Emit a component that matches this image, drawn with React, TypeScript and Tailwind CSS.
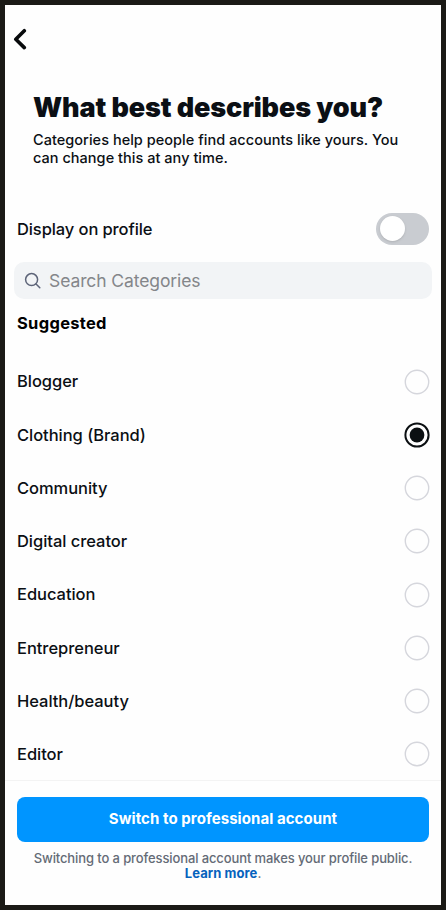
import React from "react";

const categories = ["Blogger", "Clothing (Brand)", "Community", "Digital creator", "Education", "Entrepreneur", "Health/beauty", "Editor"];

function Radio({ checked }: { checked: boolean }) {
  return (
    <svg className="-mr-px" width="26" height="26" viewBox="0 0 26 26" fill="none">
      {checked ? (
        <>
          <circle cx="13" cy="13" r="11.6" stroke="#0b0f12" strokeWidth="2" />
          <circle cx="13" cy="13" r="7.4" fill="#0b0f12" />
        </>
      ) : (
        <circle cx="13" cy="13" r="11.7" stroke="#d5d6dc" strokeWidth="1.4" />
      )}
    </svg>
  );
}

export default function App() {
  return (
    <div className="flex h-[910px] w-[446px] flex-col overflow-hidden border-[5px] border-[#1b1a16] bg-[#fefefe] font-['Inter',sans-serif] text-[#0b0f14]">
      <header className="pt-[23px] pl-[8px]">
        <svg width="14" height="22" viewBox="0 0 14 22" fill="none" stroke="#080a0c" strokeWidth="3.6" strokeLinecap="round" strokeLinejoin="round">
          <path d="M11.3 2.7 2.8 11.2 11.3 19.6" />
        </svg>
      </header>
      <section className="mt-[40px] pl-[28px]">
        <h1 className="text-[27px] leading-[36px] font-black tracking-[-0.12px] whitespace-nowrap">What best describes you?</h1>
        <p className="mt-[5px] text-[14.5px] leading-[18px] font-medium tracking-[0.03px] whitespace-nowrap">Categories help people find accounts like yours. You<br />can change this at any time.</p>
      </section>
      <div className="mt-[45px] flex h-[33px] items-center justify-between pr-[12px] pl-[12px]">
        <span className="pt-px text-[16.5px] font-medium tracking-[-0.1px]">Display on profile</span>
        <span className="flex h-[32px] w-[53px] items-center rounded-full bg-[#c9ccd1] pl-[4px]"><span className="size-[25px] rounded-full bg-white shadow-sm" /></span>
      </div>
      <div className="mx-[9px] mt-[17px] flex h-[37px] shrink-0 items-center rounded-[10px] bg-[#f2f4f6] pl-[10px] text-[17.5px] tracking-[-0.1px] text-[#84868a]">
        <svg className="mr-[7px]" width="18" height="18" viewBox="0 0 18 18" fill="none" stroke="#5d6478" strokeWidth="1.5" strokeLinecap="round"><circle cx="7.6" cy="7.6" r="6" /><path d="m12 12 3.8 3.8" /></svg>
        <span className="pt-px">Search Categories</span>
      </div>
      <h2 className="mt-[12px] pl-[12px] text-[16.5px] leading-[24px] font-bold tracking-[0.3px] text-black">Suggested</h2>
      <div className="mt-[20px] flex flex-col">
        {categories.map((c) => (
          <div key={c} className="flex h-[53.25px] items-center justify-between px-[12px] text-[16.5px] font-medium tracking-[-0.04px]">
            <span>{c}</span>
            <Radio checked={c === "Clothing (Brand)"} />
          </div>
        ))}
      </div>
      <footer className="-mt-px border-t border-[#f3f3f3] pt-[16px] text-center">
        <div className="mx-[12px] flex h-[45px] items-center justify-center rounded-[8px] bg-[#0095ff] text-[15px] font-bold tracking-[0.07px] text-white">Switch to professional account</div>
        <p className="mt-[9px] text-[13px] leading-[15px] font-medium tracking-[-0.11px] whitespace-nowrap text-[#646b76]">Switching to a professional account makes your profile public.<br /><span className="font-bold tracking-[0.07px] text-[#0562bd]">Learn more</span>.</p>
      </footer>
    </div>
  );
}
